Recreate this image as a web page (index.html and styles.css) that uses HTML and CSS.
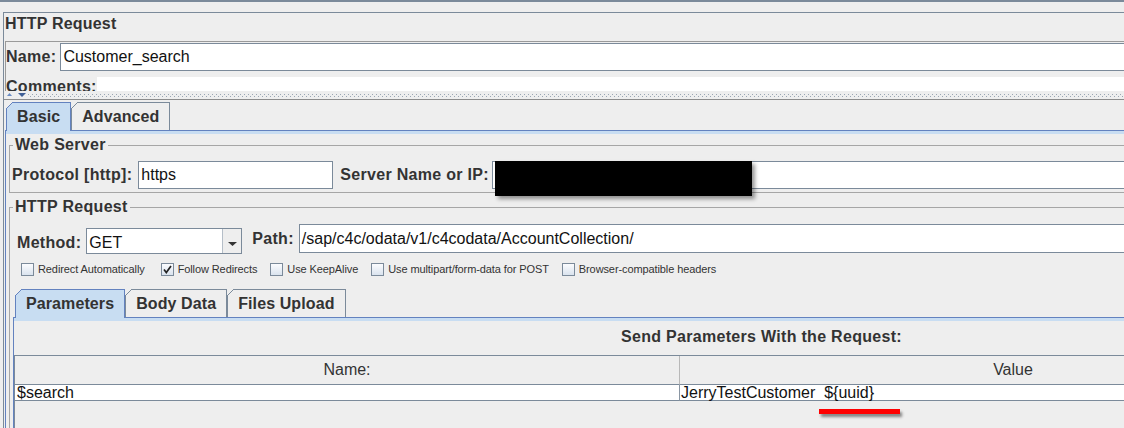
FILE: index.html
```html
<!DOCTYPE html>
<html lang="en">
<head>
    <meta charset="UTF-8">
    <title>HTTP Request</title>
    <link rel="stylesheet" href="styles.css">
</head>
<body>
    <div class="topbar"></div>
    <div class="editor">
        <div class="editor-title">HTTP Request</div>

        <div class="name-box">
            <div class="name-row">
                <span class="label">Name:</span>
                <div class="input name-input">Customer_search</div>
            </div>
            <div class="comments-row">
                <span class="label">Comments:</span>
                <div class="comments-area"></div>
            </div>
        </div>

        <div class="divider">
            <svg width="24" height="5" viewBox="0 0 24 5">
                <polygon points="3,4 5.5,1 8,4" fill="#6a8cc4"/>
                <polygon points="14,1 22,1 18,5" fill="#3f5f96"/>
            </svg>
        </div>

        <div class="lower">
            <div class="tabs">
                <div class="tab active">Basic</div>
                <div class="tab">Advanced</div>
            </div>
            <div class="tab-body">
                <div class="group">
                    <div class="group-title">Web Server</div>
                    <div class="server-row">
                        <span class="label">Protocol [http]:</span>
                        <div class="input protocol">https</div>
                        <span class="label server-label">Server Name or IP:</span>
                        <div class="input server">
                            <div class="redact"></div>
                        </div>
                    </div>
                </div>

                <div class="group request">
                    <div class="group-title">HTTP Request</div>
                    <div class="method-row">
                        <div class="method">
                            <span class="label">Method:</span>
                            <div class="combo">
                                <span class="combo-value">GET</span>
                                <span class="combo-arrow">
                                    <svg width="9" height="4" viewBox="0 0 9 4"><polygon points="0,0 9,0 4.5,4" fill="#333"/></svg>
                                </span>
                            </div>
                        </div>
                        <div class="path">
                            <span class="label">Path:</span>
                            <div class="input path-input">/sap/c4c/odata/v1/c4codata/AccountCollection/</div>
                        </div>
                    </div>

                    <div class="options">
                        <span class="check"><span class="box"></span>Redirect Automatically</span>
                        <span class="check"><span class="box"><svg width="11" height="11" viewBox="0 0 11 11"><path d="M2 5.5 L4.3 8.5 L9 2" fill="none" stroke="#222" stroke-width="1.7"/></svg></span>Follow Redirects</span>
                        <span class="check"><span class="box"></span>Use KeepAlive</span>
                        <span class="check"><span class="box"></span>Use multipart/form-data for POST</span>
                        <span class="check"><span class="box"></span>Browser-compatible headers</span>
                    </div>

                    <div class="tabs sub-tabs">
                        <div class="tab active">Parameters</div>
                        <div class="tab">Body Data</div>
                        <div class="tab">Files Upload</div>
                    </div>
                    <div class="tab-body params">
                        <div class="params-title">Send Parameters With the Request:</div>
                        <div class="table-scroll">
                            <div class="param-table">
                                <div class="th">Name:</div>
                                <div class="th">Value</div>
                                <div class="td">$search</div>
                                <div class="td value">JerryTestCustomer  ${uuid}<span class="mark"></span></div>
                            </div>
                        </div>
                    </div>
                </div>
            </div>
        </div>
    </div>
</body>
</html>
```

FILE: styles.css
```css
html {
    overflow: hidden;
}

body {
    margin: 0;
    height: 428px;
    overflow: hidden;
    background-color: #eeeeee;
    color: #333;
    font-family: "Liberation Sans", Arial, sans-serif;
}

.topbar {
    height: 2px;
    background-color: #7b8a9a;
}

.editor {
    width: 1511px;
    margin: 10px 0 0 3px;
    border-top: 1px solid #7b8a9a;
    border-left: 1px solid #7b8a9a;
}

.editor-title {
    height: 28px;
    box-sizing: border-box;
    padding: 2px 0 0 1px;
    font-weight: bold;
    font-size: 16px;
    line-height: 18px;
    letter-spacing: 0.2px;
}

.label {
    font-weight: bold;
    font-size: 16px;
    line-height: 18px;
    letter-spacing: 0.3px;
    white-space: nowrap;
    color: #333;
}

.input {
    height: 28px;
    box-sizing: border-box;
    padding: 0 2px;
    background-color: #fff;
    border: 1px solid #7b8a9a;
    font-size: 16px;
    line-height: 26px;
    color: #111;
    white-space: nowrap;
    overflow: hidden;
}

/* name + comments */
.name-box {
    margin-left: 1px;
    border-top: 1px solid #9a9a9a;
    border-left: 1px solid #9a9a9a;
}

.name-row {
    display: flex;
    align-items: center;
    padding-top: 1px;
}

.name-input {
    flex: 1;
    margin-left: 4px;
}

.comments-row {
    display: flex;
    height: 20px;
    box-sizing: border-box;
    padding-top: 7px;
    overflow: hidden;
}

.comments-area {
    flex: 1;
    margin-top: -1px;
    background-color: #fff;
}

.divider {
    height: 8px;
    background-image:
        repeating-linear-gradient(90deg, #9aa6b3 0 1px, transparent 1px 4px),
        repeating-linear-gradient(90deg, transparent 0 2px, #9aa6b3 2px 3px, transparent 3px 4px);
    background-size: 100% 1px, 100% 1px;
    background-position: 0 3px, 0 5px;
    background-repeat: no-repeat;
}

.divider svg {
    display: block;
    padding-top: 1px;
    background-color: #eeeeee;
}

.lower {
    border-top: 1px solid #8c8c8c;
    padding-top: 2px;
}

/* tabs */
.tabs {
    display: flex;
    margin-left: 2px;
    position: relative;
    z-index: 1;
}

.tab {
    position: relative;
    height: 28px;
    box-sizing: border-box;
    padding: 0 10px;
    border: 1px solid #7b8a9a;
    border-bottom: none;
    font-weight: bold;
    font-size: 16px;
    line-height: 27px;
    letter-spacing: 0.1px;
    color: #333;
}

.tab::before {
    content: "";
    position: absolute;
    top: -1px;
    left: -1px;
    width: 7px;
    height: 7px;
    background: linear-gradient(135deg, #eeeeee 0 calc(50% - 0.7px), #7b8a9a calc(50% - 0.7px) calc(50% + 0.7px), transparent calc(50% + 0.7px));
}

.tab.active {
    height: 29px;
    margin-bottom: -1px;
    background-color: #c8ddf2;
    border-color: #6382bf;
}

.tab.active::before {
    background: linear-gradient(135deg, #eeeeee 0 calc(50% - 0.7px), #6382bf calc(50% - 0.7px) calc(50% + 0.7px), transparent calc(50% + 0.7px));
}

.tab-body {
    margin-left: 1px;
    border-top: 1px solid #6382bf;
    border-left: 1px solid #6382bf;
    box-shadow: inset 0 3px 0 #c8ddf2;
}

/* titled groups */
.group {
    margin: 14px 3px 0 3px;
    padding: 0 2px 3px 2px;
    border: 1px solid #a6a6a6;
}

.group-title {
    width: max-content;
    margin: -10px 0 0 1px;
    padding: 0 2px;
    background-color: #eeeeee;
    font-weight: bold;
    font-size: 16px;
    line-height: 18px;
    letter-spacing: 0.3px;
}

.server-row {
    display: flex;
    align-items: center;
    margin-top: 7px;
}

.protocol {
    width: 195px;
    margin-left: 6px;
}

.server-label {
    margin-left: 7px;
}

.server {
    flex: 1;
    margin-left: 3px;
    position: relative;
    overflow: visible;
}

.redact {
    position: absolute;
    left: 2px;
    top: -1px;
    width: 257px;
    height: 35px;
    background-color: #000;
    box-shadow: 3px 3px 4px rgba(0, 0, 0, 0.4);
}

/* method / path */
.method-row {
    display: flex;
    margin-top: 7px;
    padding-left: 5px;
}

.method {
    display: flex;
    align-items: baseline;
    margin-top: 5px;
}

.combo {
    display: flex;
    width: 156px;
    height: 26px;
    box-sizing: border-box;
    margin-left: 5px;
    border: 1px solid #7b8a9a;
    background-color: #fff;
}

.combo-value {
    flex: 1;
    padding: 5px 0 0 2px;
    font-size: 16px;
    line-height: 18px;
    color: #111;
}

.combo-arrow {
    width: 19px;
    display: flex;
    justify-content: center;
    padding-top: 13px;
    box-sizing: border-box;
    border-left: 1px solid #b5bec8;
    background-color: #eeeeee;
}

.combo-arrow svg {
    display: block;
}

.path {
    flex: 1;
    display: flex;
    align-items: center;
    margin-left: 10px;
}

.path-input {
    flex: 1;
    height: 29px;
    margin-left: 5px;
    line-height: 27px;
}

/* checkboxes */
.options {
    display: flex;
    gap: 13px;
    margin-top: 9px;
    padding-left: 9px;
}

.check {
    display: flex;
    align-items: center;
    font-size: 11px;
    line-height: 13px;
    letter-spacing: -0.1px;
    color: #333;
    white-space: nowrap;
}

.check:first-child {
    margin-right: 3px;
}

.box {
    width: 13px;
    height: 13px;
    box-sizing: border-box;
    margin-right: 4px;
    border: 1px solid #7b8a9a;
    background: linear-gradient(#fbfcfe, #dae3ee);
}

.box svg {
    display: block;
}

/* parameters */
.sub-tabs {
    margin-top: 13px;
    margin-left: 3px;
}

.params {
    margin-left: 1px;
    height: 120px;
}

.params-title {
    padding-top: 10px;
    text-align: center;
    font-weight: bold;
    font-size: 16px;
    line-height: 18px;
    letter-spacing: 0.3px;
}

.table-scroll {
    margin-top: 9px;
    height: 80px;
    border-top: 1px solid #7b8a9a;
    border-left: 1px solid #7b8a9a;
}

.param-table {
    display: grid;
    grid-template-columns: 665px 666px;
}

.th {
    height: 29px;
    box-sizing: border-box;
    border-bottom: 1px solid #7b8a9a;
    font-size: 16px;
    line-height: 28px;
    text-align: center;
    color: #333;
}

.th:first-child {
    border-right: 1px solid #b8b8b8;
}

.td {
    height: 16px;
    box-sizing: border-box;
    padding-left: 2px;
    border-bottom: 1px solid #7b8a9a;
    background-color: #fff;
    font-size: 16px;
    line-height: 15px;
    white-space: pre;
    color: #111;
}

.td:nth-child(3) {
    border-right: 1px solid #8a96a3;
}

.td.value {
    position: relative;
    padding-left: 1px;
}

.mark {
    position: absolute;
    left: 139px;
    top: 24px;
    width: 81px;
    height: 5px;
    background-color: #ff0000;
    box-shadow: 2px 3px 3px rgba(0, 0, 0, 0.45);
}
```
